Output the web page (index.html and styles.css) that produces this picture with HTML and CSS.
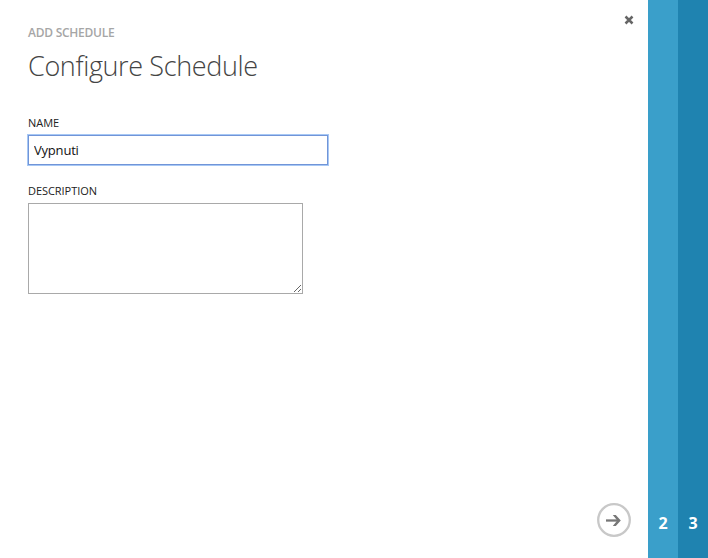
FILE: index.html
```html
<!DOCTYPE html>
<html lang="en">
<head>
<meta charset="utf-8">
<title>Add Schedule</title>
<link rel="stylesheet" href="styles.css">
</head>
<body>
<div class="wizard">
  <main class="panel">
    <button class="close" aria-label="Close">
      <svg width="10" height="10" viewBox="0 0 10 10"><path d="M1.5 1.5 8.5 8.5M8.5 1.5 1.5 8.5"/></svg>
    </button>
    <header>
      <div class="eyebrow">ADD SCHEDULE</div>
      <h1>Configure Schedule</h1>
    </header>
    <form class="form">
      <label for="name">NAME</label>
      <input id="name" class="name" type="text" value="Vypnuti">
      <label for="desc">DESCRIPTION</label>
      <textarea id="desc" class="desc"></textarea>
    </form>
    <button class="next" aria-label="Next">
      <svg width="34" height="34" viewBox="0 0 34 34">
        <circle cx="17" cy="17" r="15.8"/>
        <path class="shaft" d="M9 17.5H22"/>
        <path class="head" d="M15.8 12H18.8L23.8 17.5 18.8 23H15.8L20.3 17.5Z"/>
      </svg>
    </button>
  </main>
  <div class="step step-2">2</div>
  <div class="step step-3">3</div>
</div>
</body>
</html>
```

FILE: styles.css
```css
* { box-sizing: border-box; }
body {
  margin: 0;
  background: #fff;
  font-family: "Open Sans", "Noto Sans", sans-serif;
  overflow: hidden;
}
button { padding: 0; border: 0; background: none; display: block; }
svg { display: block; }
.wizard {
  display: grid;
  grid-template-columns: 648px 30px 30px;
  height: 558px;
}
.panel { position: relative; padding: 24px 28px 0; }
.close { position: absolute; top: 15px; right: 14px; }
.close path { stroke: #666; stroke-width: 2.5; fill: none; }
.eyebrow {
  font-size: 12px;
  line-height: 18px;
  font-weight: 600;
  letter-spacing: -0.25px;
  color: #a6a6a6;
}
h1 {
  margin: 4px 0 0;
  font-size: 27px;
  line-height: 40px;
  font-weight: 300;
  letter-spacing: -0.37px;
  color: #444;
}
.form { display: flex; flex-direction: column; align-items: flex-start; margin-top: 29px; }
label {
  height: 16px;
  font-size: 11px;
  line-height: 16px;
  letter-spacing: -0.05px;
  color: #222;
}
.name {
  width: 300px;
  height: 30px;
  margin: 4px 0 18px;
  padding: 0 5px;
  border: 1px solid #7195d8;
  border-radius: 0;
  outline: 1px solid #a7c8f5;
  outline-offset: 0;
  font: 13px "Open Sans", "Noto Sans", sans-serif;
  letter-spacing: -0.2px;
  color: #111;
}
.desc {
  width: 275px;
  height: 91px;
  margin-top: 4px;
  border: 1px solid #a9a9a9;
  outline: none;
}
.next { position: absolute; right: 17px; bottom: 21px; }
.next circle { fill: #fff; stroke: #c8c8c8; stroke-width: 2.3; }
.shaft { stroke: #777; stroke-width: 2.3; }
.head { fill: #777; }
.step {
  display: flex;
  align-items: flex-end;
  justify-content: center;
  padding-bottom: 24px;
  font-size: 16px;
  line-height: 22px;
  font-weight: 700;
  color: #fff;
}
.step-2 { background: #3a9fca; }
.step-3 { background: #1f83b0; }
```
